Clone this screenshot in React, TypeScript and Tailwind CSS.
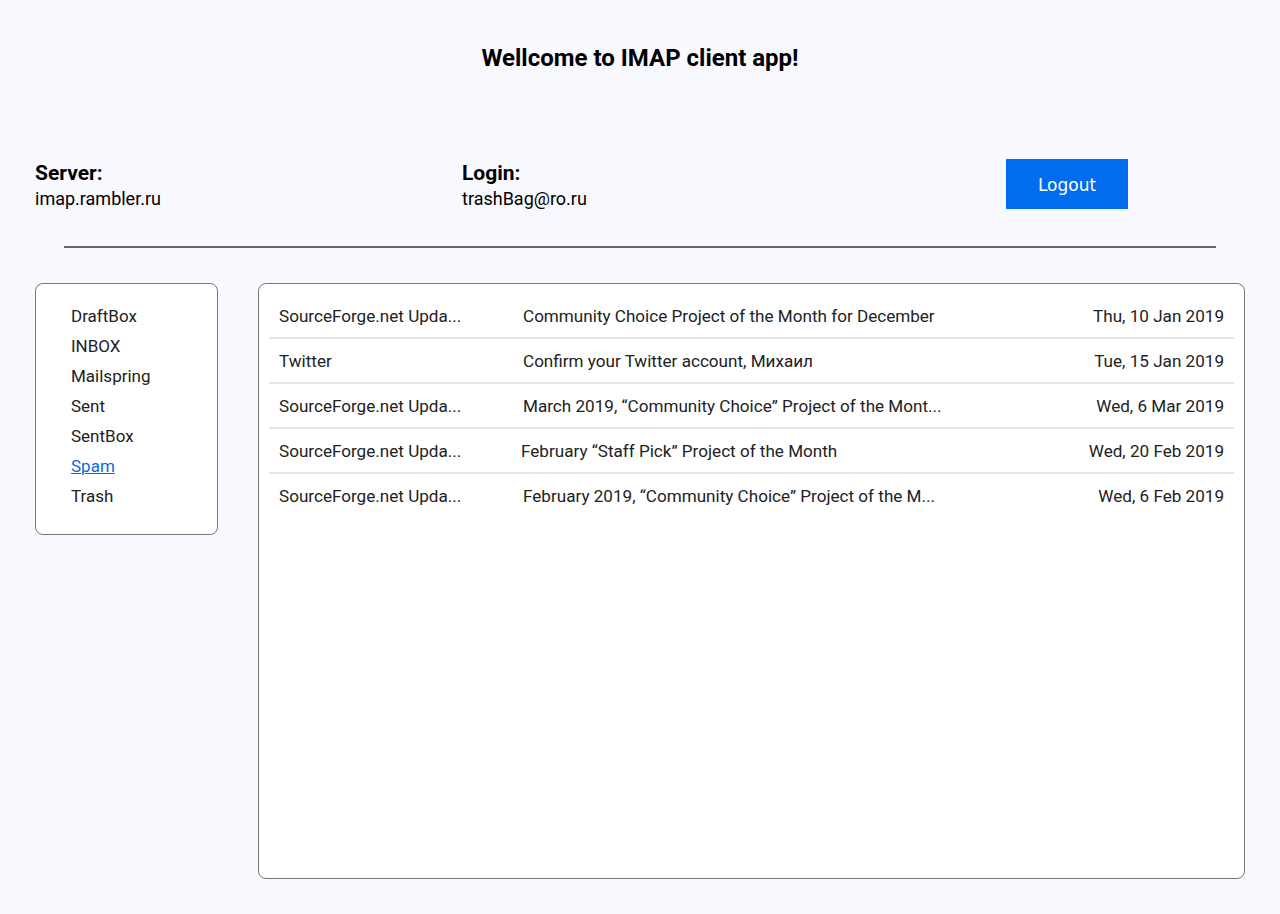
const folders = ['DraftBox', 'INBOX', 'Mailspring', 'Sent', 'SentBox', 'Spam', 'Trash'];

const messages = [
  { from: 'SourceForge.net Upda...', subject: 'Community Choice Project of the Month for December', date: 'Thu, 10 Jan 2019' },
  { from: 'Twitter', subject: 'Confirm your Twitter account, Михаил', date: 'Tue, 15 Jan 2019' },
  { from: 'SourceForge.net Upda...', subject: 'March 2019, “Community Choice” Project of the Mont...', date: 'Wed, 6 Mar 2019' },
  { from: 'SourceForge.net Upda...', subject: 'February “Staff Pick” Project of the Month', date: 'Wed, 20 Feb 2019', shift: true },
  { from: 'SourceForge.net Upda...', subject: 'February 2019, “Community Choice” Project of the M...', date: 'Wed, 6 Feb 2019' },
];

export default function App() {
  return (
    <div className="min-h-[914px] bg-[#f8f9fe] font-['Roboto',sans-serif] text-black">
      <h1 className="pt-[43px] text-center text-[24px] font-bold leading-[30px]">Wellcome to IMAP client app!</h1>

      <div className="mt-[87px] flex items-start pl-[35px]">
        <div className="w-[427px]">
          <div className="text-[21px] font-bold leading-[26px]">Server:</div>
          <div className="text-[18px] leading-[26px]">imap.rambler.ru</div>
        </div>
        <div className="w-[544px]">
          <div className="text-[21px] font-bold leading-[26px]">Login:</div>
          <div className="text-[18px] leading-[26px]">trashBag@ro.ru</div>
        </div>
        <button className="mt-[-1px] h-[50px] w-[122px] bg-[#016cf0] pt-[3px] font-['DejaVu_Sans',sans-serif] text-[17px] text-white">
          Logout
        </button>
      </div>

      <hr className="mx-[64px] mt-[34px] border-0 border-t-2 border-[#666]" />

      <div className="mt-[35px] flex items-start gap-[40px] px-[35px]">
        <ul className="w-[183px] rounded-[8px] border border-[#777] bg-white pt-[17px] pb-[23px] pl-[35px]">
          {folders.map((f) => (
            <li key={f} className="text-[17px] leading-[30px] text-[#222]">
              {f === 'Spam' ? (
                <a href="#" className="text-[#0a66dd] underline">{f}</a>
              ) : (
                f
              )}
            </li>
          ))}
        </ul>

        <div className="h-[596px] flex-1 rounded-[8px] border border-[#777] bg-white px-[10px] pt-[10px]">
          {messages.map((m, i) => (
            <div
              key={i}
              className={`flex h-[45px] items-center border-b-2 pt-[2px] text-[17.1px] text-[#222] ${
                i < messages.length - 1 ? 'border-[#e6e6e6]' : 'border-transparent'
              }`}
            >
              <div className="w-[254px] pl-[10px]">{m.from}</div>
              <div className={`flex-1 ${m.shift ? 'ml-[-2px]' : ''}`}>{m.subject}</div>
              <div className="pr-[10px] text-right">{m.date}</div>
            </div>
          ))}
        </div>
      </div>
    </div>
  );
}
